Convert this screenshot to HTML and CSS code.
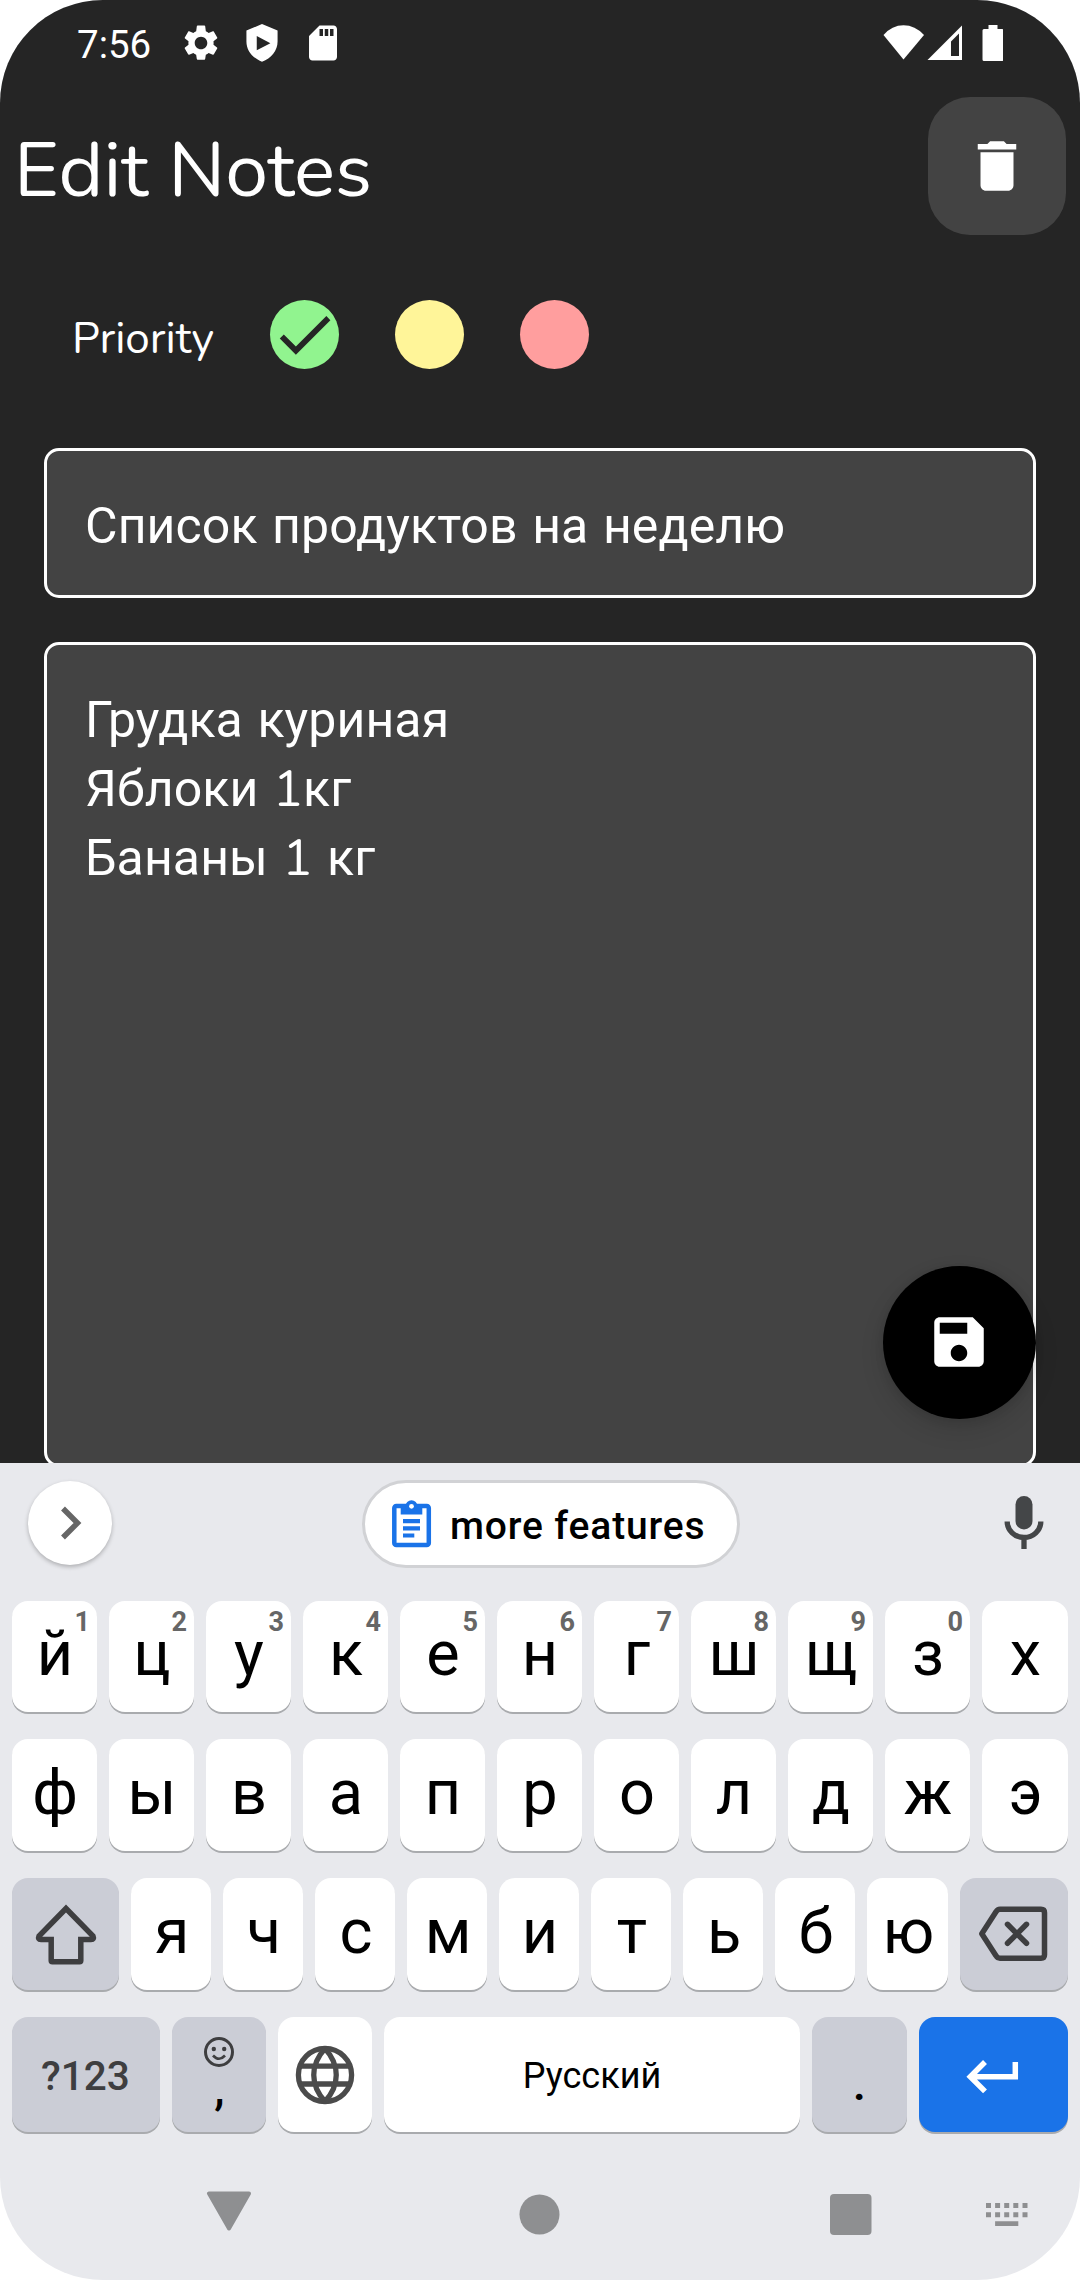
FILE: index.html
```html
<!DOCTYPE html>
<html lang="ru">
<head>
<meta charset="utf-8">
<title>Edit Notes</title>
<link rel="stylesheet" href="styles.css">
</head>
<body>
<div class="phone">
  <main class="app">
    <header class="status">
      <span class="clock">7:56</span>
      <div class="status-left">
        <svg class="s-icon" viewBox="0 0 24 24"><path d="M19.14 12.94c.04-.3.06-.61.06-.94 0-.32-.02-.64-.07-.94l2.03-1.58c.18-.14.23-.41.12-.61l-1.92-3.32c-.12-.22-.37-.29-.59-.22l-2.39.96c-.5-.38-1.03-.7-1.62-.94L14.4 2.41c-.04-.24-.24-.41-.48-.41h-3.84c-.24 0-.43.17-.47.41L9.25 5.35c-.59.24-1.13.57-1.62.94l-2.39-.96c-.22-.08-.47 0-.59.22L2.74 8.87c-.12.21-.08.47.12.61l2.03 1.58c-.05.3-.09.63-.09.94s.02.64.07.94l-2.03 1.58c-.18.14-.23.41-.12.61l1.92 3.32c.12.22.37.29.59.22l2.39-.96c.5.38 1.03.7 1.62.94l.36 2.54c.05.24.24.41.48.41h3.84c.24 0 .44-.17.47-.41l.36-2.54c.59-.24 1.13-.56 1.62-.94l2.39.96c.22.08.47 0 .59-.22l1.92-3.32c.12-.22.07-.47-.12-.61l-2.01-1.58zM12 15.6c-1.98 0-3.6-1.62-3.6-3.6s1.62-3.6 3.6-3.6 3.6 1.62 3.6 3.6-1.62 3.6-3.6 3.6z"/></svg>
        <svg class="s-icon" viewBox="0 0 24 24"><path fill-rule="evenodd" d="M12 1.2L3.1 4.9v6.2c0 5.3 3.6 9.6 8.9 11.6 5.300-2 8.900-6.300 8.900-11.600V4.900zM9 8l7.800 4.100L9 16.200z"/></svg>
        <svg class="s-icon" viewBox="0 0 24 24"><path d="M18 2h-8L4.020 8 4 20c0 1.100.9 2 2 2h12c1.100 0 2-.9 2-2V4c0-1.100-.9-2-2-2zm-6 6h-2V4h2v4zm3 0h-2V4h2v4zm3 0h-2V4h2v4z"/></svg>
      </div>
      <div class="status-right">
        <svg width="120" height="36" viewBox="0 0 120 36"><path d="M0.500 10Q9 0.300 20.500 0.300T41 10L20.500 34.500z"/><path fill-rule="evenodd" d="M79 0.500V35H44.500zM76 8.500L68 16.500V31H76z"/><path d="M105.500 0h9v4H119q1.500 0 1.500 1.500v29q0 1.500-1.500 1.500h-18q-1.500 0-1.500-1.500v-29Q99.500 4 101 4h4.500z"/></svg>
      </div>
    </header>

    <div class="titlebar">
      <h1 class="title">Edit Notes</h1>
      <button class="trash" aria-label="Delete"><svg width="66" height="66" viewBox="0 0 24 24"><path d="M6 19c0 1.100.9 2 2 2h8c1.100 0 2-.9 2-2V7H6v12zM19 4h-3.500l-1-1h-5l-1 1H5v2h14V4z"/></svg></button>
    </div>

    <div class="priority">
      <span class="priority-label">Priority</span>
      <div class="dots">
        <span class="dot green"><svg width="69" height="69" viewBox="0 0 24 24"><path d="M9 16.200L4.800 12l-1.400 1.400L9 19 21 7l-1.400-1.400L9 16.200z"/></svg></span>
        <span class="dot yellow"></span>
        <span class="dot red"></span>
      </div>
    </div>

    <div class="field field-title">Список продуктов на неделю</div>
    <div class="field field-body">
      <p>Грудка куриная</p>
      <p>Яблоки <span class="num">1</span>кг</p>
      <p>Бананы <span class="num">1</span> кг</p>
    </div>

    <button class="fab" aria-label="Save"><svg width="66" height="66" viewBox="0 0 24 24"><path d="M17 3H5c-1.110 0-2 .9-2 2v14c0 1.100.89 2 2 2h14c1.100 0 2-.9 2-2V7l-4-4zm-5 16c-1.660 0-3-1.340-3-3s1.340-3 3-3 3 1.340 3 3-1.340 3-3 3zm3-10H5V5h10v4z"/></svg></button>
  </main>

  <section class="keyboard">
    <div class="strip">
      <button class="expand" aria-label="Expand"><svg width="24" height="36" viewBox="0 0 24 36"><path d="M3 3.500L17.500 18 3 32.500" fill="none" stroke="#666" stroke-width="5.500"/></svg></button>
      <button class="chip">
        <svg width="40" height="48" viewBox="0 0 40 48"><rect x="2.300" y="6" width="34.500" height="39" rx="2" fill="none" stroke="#1a73e8" stroke-width="4.500"/><path fill="#1a73e8" d="M8.700 5h21.600v9.500H8.700zM11 19h17v4.200H11zM11 26.200h17v4.200H11zM11 33.400h11.300v4.200H11z"/><circle cx="19.500" cy="6.200" r="6" fill="#1a73e8"/><circle cx="19.500" cy="6.300" r="2.400" fill="#fff"/></svg>
        <span>more features</span>
      </button>
      <svg class="mic" width="40" height="54" viewBox="0 0 40 54"><rect x="11.500" y="0" width="17" height="33.500" rx="8.500" fill="#444648"/><path d="M3.200 25.500a16.800 16 0 0 0 33.600 0M20 42v11" fill="none" stroke="#444648" stroke-width="5.300"/></svg>
    </div>

    <div class="row row-11">
      <span class="key">й<i>1</i></span><span class="key">ц<i>2</i></span><span class="key">у<i>3</i></span><span class="key">к<i>4</i></span><span class="key">е<i>5</i></span><span class="key">н<i>6</i></span><span class="key">г<i>7</i></span><span class="key">ш<i>8</i></span><span class="key">щ<i>9</i></span><span class="key">з<i>0</i></span><span class="key">х</span>
    </div>
    <div class="row row-11">
      <span class="key">ф</span><span class="key">ы</span><span class="key">в</span><span class="key">а</span><span class="key">п</span><span class="key">р</span><span class="key">о</span><span class="key">л</span><span class="key">д</span><span class="key">ж</span><span class="key">э</span>
    </div>
    <div class="row row-shift">
      <span class="key mod"><svg width="64" height="62" viewBox="0 0 64 62"><path d="M32 5.500L59 33Q60.500 36.500 57 36.500H46.800V57.500Q46.800 58.700 45.600 58.700H18.400Q17.200 58.700 17.200 57.500V36.500H7Q3.500 36.500 5 33z" fill="none" stroke="#3e3e40" stroke-width="5.500"/></svg></span><span class="key">я</span><span class="key">ч</span><span class="key">с</span><span class="key">м</span><span class="key">и</span><span class="key">т</span><span class="key">ь</span><span class="key">б</span><span class="key">ю</span><span class="key mod backspace"><svg width="70" height="56" viewBox="0 0 70 56"><path d="M22 3.300H63Q66.500 3.300 66.500 6.800V48.700Q66.500 52.200 63 52.200H22Q19.500 52.200 18 49.700L3.800 27.750 18 5.800Q19.500 3.300 22 3.300zM29.500 18.300L48.500 37.300M48.500 18.300L29.500 37.300" fill="none" stroke="#3e3e40" stroke-width="5.500" stroke-linecap="round" stroke-linejoin="round"/></svg></span>
    </div>
    <div class="row row-space">
      <span class="key mod sym">?123</span>
      <span class="key mod comma"><svg width="32" height="32" viewBox="0 0 32 32"><circle cx="16" cy="16" r="13.500" fill="none" stroke="#3e3e40" stroke-width="3"/><circle cx="10.800" cy="13" r="2.200" fill="#3e3e40"/><circle cx="21.200" cy="13" r="2.200" fill="#3e3e40"/><path d="M10 19.500q6 6.500 12 0" fill="none" stroke="#3e3e40" stroke-width="2.600"/></svg><b>,</b></span>
      <span class="key globe"><svg width="60" height="60" viewBox="0 0 60 60"><g fill="none" stroke="#4b4b4b" stroke-width="5.300"><circle cx="30" cy="30" r="26.600"/><path d="M5 21.200h50M5 39h50M30 3.500C15 20 15 40 30 56.500M30 3.500C45 20 45 40 30 56.500"/></g></svg></span>
      <span class="key space">Русский</span>
      <span class="key mod period">.</span>
      <span class="key enter"><svg width="54" height="36" viewBox="0 0 54 36"><path d="M50.300 3V17.700H5M20 3L5.300 17.700 20 32.400" fill="none" stroke="#fff" stroke-width="5.500"/></svg></span>
    </div>

    <nav class="navbar">
      <svg class="nav-back" width="46" height="40" viewBox="0 0 46 40"><path d="M3 2.500H43L23 37.500z" stroke="#8e8f91" stroke-width="4" stroke-linejoin="round"/></svg>
      <svg class="nav-home" width="41" height="41" viewBox="0 0 41 41"><circle cx="20.500" cy="20.500" r="20"/></svg>
      <svg class="nav-recent" width="42" height="42" viewBox="0 0 42 42"><rect width="41.500" height="41" rx="4"/></svg>
      <svg class="nav-ime" width="42" height="24" viewBox="0 0 42 24"><path d="M0 0h5v5H0zM9.100 0h5v5h-5zM18.200 0h5v5h-5zM27.300 0h5v5h-5zM36.500 0h5v5h-5zM0 9.200h5v5H0zM9.100 9.200h5v5h-5zM18.200 9.200h5v5h-5zM27.300 9.200h5v5h-5zM36.500 9.200h5v5h-5zM9.100 18.300h23.200V23H9.100z"/></svg>
    </nav>
  </section>
</div>
</body>
</html>
```
FILE: styles.css
```css
* { box-sizing: border-box; }
body { margin: 0; background: #fff; font-family: Roboto, "Noto Sans", sans-serif; }
button { border: 0; padding: 0; font: inherit; color: inherit; }
svg { display: block; flex: none; }

.phone { width: 1080px; height: 2280px; border-radius: 103px; overflow: hidden; background: #e8e9ed; }

/* note editor */
.app { position: relative; height: 1463px; overflow: hidden; background: #252525; color: #fff; padding: 0 44px; }
.app svg { fill: #fff; }

.status { display: flex; align-items: center; height: 86px; margin: 0 -44px; padding: 0 77px; }
.clock { font-size: 38.500px; line-height: 46px; width: 103px; padding-top: 3px; }
.status-left { display: flex; gap: 19px; }
.s-icon { width: 42px; height: 42px; }
.status-right { margin-left: auto; }

.titlebar { display: flex; justify-content: space-between; margin: 11px -30px 0 -30px; height: 138px; }
.title { margin: 0; padding-top: 29px; font: 400 77px/90px Nunito, Lato, sans-serif; white-space: nowrap; }
.trash { display: flex; align-items: center; justify-content: center; width: 138px; height: 138px; border-radius: 42px; background: #434343; }

.priority { display: flex; height: 69px; margin: 65px 0 79px 28px; }
.priority-label { width: 198px; padding-top: 12px; font: 400 44px/54px Nunito, Lato, sans-serif; }
.dots { display: flex; gap: 56px; }
.dot { width: 69px; height: 69px; border-radius: 50%; }
.dot svg { fill: #252525; }
.green { background: #91f48f; }
.yellow { background: #fff599; }
.red { background: #ff9e9e; }

.field { width: 992px; border: 3px solid #fff; border-radius: 15px; background: #434343; padding: 41px 38px; font-size: 50px; line-height: 69px; letter-spacing: .1px; word-spacing: 2px; white-space: nowrap; }
.field p { margin: 0; }
.field-title { height: 150px; margin-bottom: 44px; }
.field-body { height: 825px; }
.num { font-family: Nunito, Lato, sans-serif; line-height: 1; }

.fab { position: absolute; left: 883px; top: 1266px; width: 153px; height: 153px; border-radius: 50%; background: #000; display: flex; align-items: center; justify-content: center; padding: 0 1px 1px 0; box-shadow: 0 10px 24px rgba(0, 0, 0, .12), 0 2px 10px rgba(0, 0, 0, .1); }

/* keyboard */
.keyboard { height: 817px; padding: 0 12px; }
.strip { display: flex; align-items: flex-start; height: 138px; padding: 17px 24px 0 16px; }
.expand { width: 84px; height: 84px; margin-top: 1px; padding-left: 4px; border-radius: 50%; background: #fff; display: flex; align-items: center; justify-content: center; box-shadow: 0 2px 4px rgba(0, 0, 0, .25); }
.chip { display: flex; align-items: center; width: 378px; height: 88px; margin: 0 auto 0 250px; padding: 0 27px; border: 3px solid #d1d2d5; border-radius: 44px; background: #fff; font-size: 39px; font-weight: 500; color: #000; }
.chip span { margin-left: 18px; padding-top: 4px; white-space: nowrap; letter-spacing: .850px; }
.mic { margin-top: 16px; }

.row { display: grid; column-gap: 12px; height: 112px; margin-bottom: 27px; }
.row-11 { grid-template-columns: repeat(10, 85px) 86px; }
.row-11:nth-child(2) { height: 111px; }
.row-shift { grid-template-columns: 107px repeat(8, 80px) 81px 108px; }
.row-space { grid-template-columns: 148px 94px 94px 416px 95px 149px; height: 115px; margin-bottom: 0; }

.key { position: relative; display: flex; align-items: center; justify-content: center; padding: 0 0 6px 1px; border-radius: 16px; background: #fff; box-shadow: 0 2px 0 #a9abae; color: #000; font-size: 63px; }
.key i { position: absolute; top: 5px; right: 7px; font: 700 27px/32px Roboto, sans-serif; color: #666; }
.mod { background: #cbcdd6; }
.row-shift .key { padding-left: 2px; }
.row-shift .mod { padding: 0; }
.row-shift .backspace { padding: 0 3px 0 0; }
.sym { font-size: 40.500px; font-weight: 500; color: #3e3e40; padding: 3px 1px 0 0; }
.comma { flex-direction: column; justify-content: flex-start; padding: 19px 0 0; }
.comma b { padding-left: 1px; font: 500 46px/40px Roboto, sans-serif; }
.globe { padding: 0; }
.space { font-size: 36px; padding: 2px 0 0; }
.period { font-size: 48px; font-weight: 500; padding: 18px 0 0; }
.enter { background: #1a73e8; padding: 4px 3px 0 0; }

.navbar { display: flex; height: 148px; padding: 59px 28px 0 194px; }
.navbar svg { fill: #8e8f91; }
.nav-home { margin: 3px 0 0 267px; }
.nav-recent { margin: 3px 0 0 270px; }
.nav-ime { margin: 12px 0 0 114px; }
```
